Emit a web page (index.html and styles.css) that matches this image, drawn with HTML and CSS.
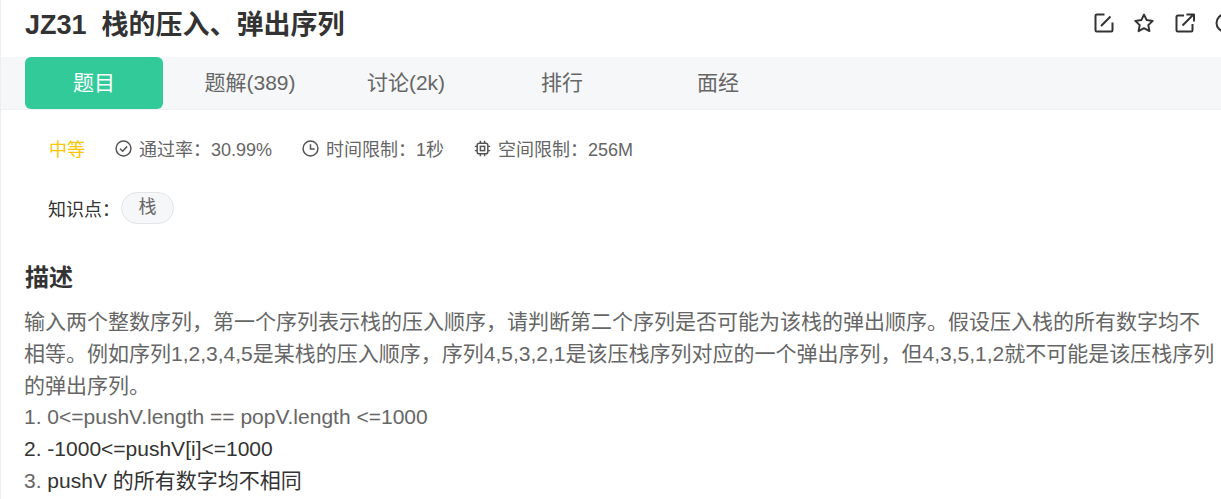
FILE: index.html
```html
<!DOCTYPE html>
<html lang="zh">
<head>
<meta charset="utf-8">
<title>JZ31 栈的压入、弹出序列</title>
<link rel="stylesheet" href="styles.css">
</head>
<body>
<div class="page">
  <header class="head">
    <h1 class="title">JZ31&nbsp; 栈的压入、弹出序列</h1>
    <div class="actions">
      <svg class="act" viewBox="0 0 20 20"><path d="M10.5 1.5H2.8a1.3 1.3 0 0 0-1.3 1.3v14.4a1.3 1.3 0 0 0 1.3 1.3h14.4a1.3 1.3 0 0 0 1.3-1.3V9.5M7 13 16.5 3.5"/></svg>
      <svg class="act" viewBox="0 0 20 20"><path d="M10 1.6l2.7 5.5 6 .8-4.4 4.2 1.1 6-5.4-2.9-5.4 2.9 1.1-6-4.4-4.2 6-.8z"/></svg>
      <svg class="act" viewBox="0 0 20 20"><path d="M9 2.5H2.8a1.3 1.3 0 0 0-1.3 1.3v13.4a1.3 1.3 0 0 0 1.3 1.3h13.4a1.3 1.3 0 0 0 1.3-1.3V11M7.5 12.5 18 2M11.5 1.5h7.5v7"/></svg>
      <svg class="act" viewBox="0 0 20 20"><circle cx="10" cy="10" r="8.5"/></svg>
    </div>
  </header>
  <nav class="tabs">
    <a class="tab tab-on">题目</a>
    <a class="tab">题解(389)</a>
    <a class="tab">讨论(2k)</a>
    <a class="tab">排行</a>
    <a class="tab">面经</a>
  </nav>
  <div class="meta">
    <span class="level">中等</span>
    <span class="stat">
      <svg class="ico" viewBox="0 0 16 16"><circle cx="8" cy="8" r="7"/><path d="M4.8 8.2 7.2 10.6 11.4 6"/></svg>通过率：30.99%
    </span>
    <span class="stat">
      <svg class="ico" viewBox="0 0 16 16"><circle cx="8" cy="8" r="7"/><path d="M8 4v4.5h4"/></svg>时间限制：1秒
    </span>
    <span class="stat">
      <svg class="ico" viewBox="0 0 16 16"><rect x="3" y="3" width="10" height="10" rx="2"/><rect x="6" y="6" width="4" height="4"/><path d="M6 .8V3M10 .8V3M6 13v2.2M10 13v2.2M.8 6H3M.8 10H3M13 6h2.2M13 10h2.2"/></svg>空间限制：256M
    </span>
  </div>
  <div class="know">
    <span class="know-label">知识点：</span><span class="pill">栈</span>
  </div>
  <h2 class="sec">描述</h2>
  <div class="desc">
    <p>输入两个整数序列，第一个序列表示栈的压入顺序，请判断第二个序列是否可能为该栈的弹出顺序。假设压入栈的所有数字均不相等。例如序列1,2,3,4,5是某栈的压入顺序，序列4,5,3,2,1是该压栈序列对应的一个弹出序列，但4,3,5,1,2就不可能是该压栈序列的弹出序列。</p>
    <p>1. 0&lt;=pushV.length == popV.length &lt;=1000</p>
    <p class="dark">2. -1000&lt;=pushV[i]&lt;=1000</p>
    <p><span>3. </span><span class="dark">pushV 的所有数字均不相同</span></p>
  </div>
</div>
</body>
</html>
```
FILE: styles.css
```css
* { box-sizing: border-box; }
html, body { margin: 0; height: 100%; overflow: hidden; background: #fff; }
body { font-family: "Liberation Sans", "Noto Sans CJK SC", sans-serif; color: #666; }
.page { width: 1221px; height: 499px; overflow: hidden; border-left: 1px solid #eceef0; }
.head { height: 57px; display: flex; justify-content: space-between; align-items: flex-start; padding: 9px 0 0 24px; }
.title { margin: 0; font-size: 27px; line-height: 32px; font-weight: 700; color: #333; }
.actions { display: flex; gap: 20.5px; padding: 4px 0 0; margin-right: -14px; }
.act { width: 20px; height: 20px; fill: none; stroke: #333; stroke-width: 2; stroke-linejoin: round; }
.tabs { height: 53px; background: #f6f7f9; display: flex; gap: 18px; align-items: stretch; padding-left: 24px; border-bottom: 1px solid #f0f1f3; }
.tab { width: 138px; font-size: 21px; color: #666; line-height: 52px; text-align: center; }
.tab-on { height: 52px; background: #32ca99; color: #fff; border-radius: 6px; }
.meta { display: flex; align-items: center; height: 20px; margin-top: 30px; padding-left: 48px; font-size: 18px; line-height: 20px; }
.level { color: #fcc600; margin-right: 30px; }
.stat { display: flex; align-items: center; color: #666; margin-right: 30px; }
.ico { width: 17px; height: 17px; margin: -4px 7px 0 0; fill: none; stroke: #555; stroke-width: 1.4; }
.know { display: flex; align-items: center; margin-top: 33px; padding-left: 47px; height: 32px; }
.know-label { font-size: 18px; color: #333; margin-top: -2px; }
.pill { width: 53px; height: 32px; border: 1px solid #e3e5e8; border-radius: 16px; background: #f6f7f9; color: #666; font-size: 18px; line-height: 28px; text-align: center; margin: -3px 0 0 1px; }
.sec { margin: 37px 0 0 24px; font-size: 24px; line-height: 32px; font-weight: 700; color: #333; }
.desc { margin: 12px 0 0 23px; width: 1195px; font-size: 21px; line-height: 31.8px; }
.desc p { margin: 0; }
.dark { color: #333; }
```
